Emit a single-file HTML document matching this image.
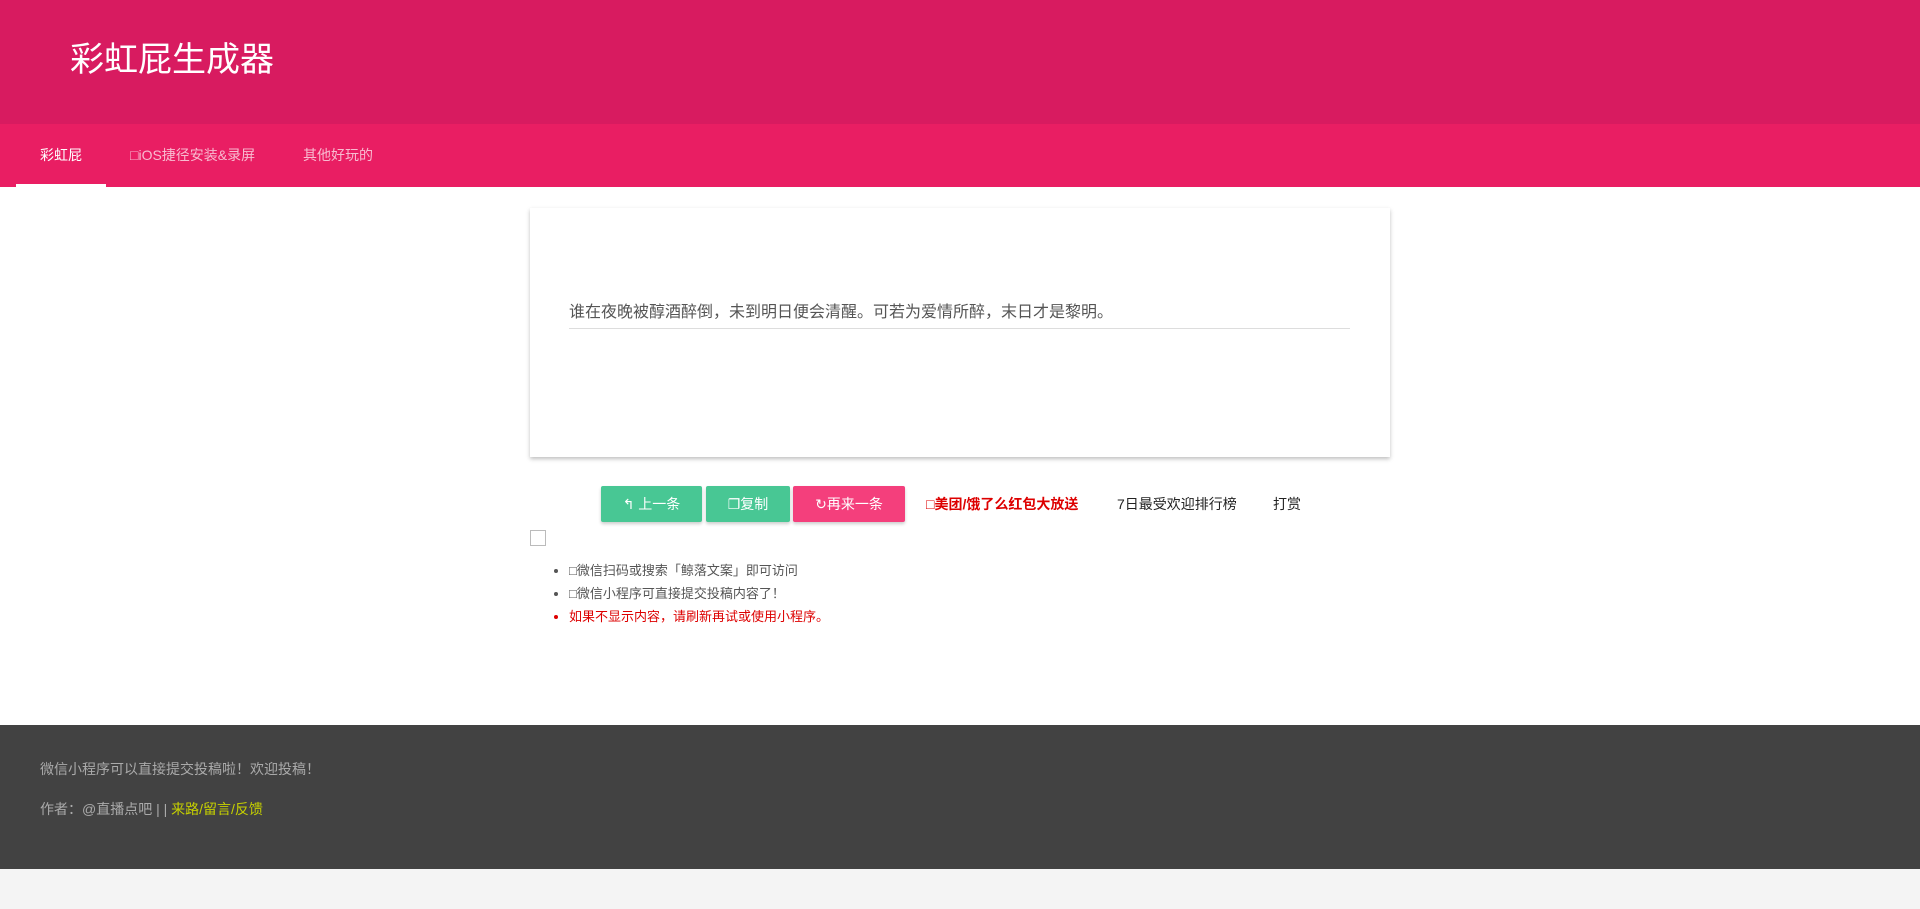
<!DOCTYPE html>
<html><head><meta charset="utf-8"><style>
body{margin:0;width:1920px;height:909px;background:#f4f4f4;font-family:"Liberation Sans","Noto Sans CJK SC",sans-serif;position:relative;overflow:hidden}
.top{position:absolute;left:0;top:0;width:1920px;height:124px;background:#d81b60}
.top h1{position:absolute;left:70px;top:38px;margin:0;font-size:34px;font-weight:normal;color:#fff;line-height:44px}
.nav{position:absolute;left:0;top:124px;width:1920px;height:63px;background:#e91e63}
.nav span{position:absolute;top:22px;font-size:14px;color:#f8bbd0;line-height:18px}
.nav .a{color:#fff}
.ul{position:absolute;left:16px;top:184px;width:90px;height:3px;background:#fff}
.main{position:absolute;left:0;top:187px;width:1920px;height:538px;background:#fff}
.card{position:absolute;left:530px;top:21px;width:860px;height:249px;background:#fff;box-shadow:0 2px 4px rgba(0,0,0,.25)}
.card .t{position:absolute;left:39px;top:93px;width:781px;font-size:16px;color:#555;line-height:24px;border-bottom:1px solid #ddd;padding-bottom:3px}
.btn{position:absolute;top:299px;height:36px;border-radius:2px;color:#fff;font-size:14px;line-height:36px;box-shadow:0 2px 3px rgba(0,0,0,.2);text-align:center}
.lk{position:absolute;top:308px;font-size:14px;line-height:18px}
.cb{position:absolute;left:530px;top:343px;width:14px;height:14px;border:1px solid #bbb}
ul{position:absolute;left:530px;top:372px;margin:0;padding-left:39px;font-size:13px;line-height:23px;color:#555}
.foot{position:absolute;left:0;top:725px;width:1920px;height:144px;background:#424242;color:#aaa;font-size:14px}
.foot p{position:absolute;left:40px;margin:0;line-height:18px}
</style></head><body>
<div class="top"><h1>彩虹屁生成器</h1></div>
<div class="nav"><span class="a" style="left:40px">彩虹屁</span><span style="left:130px">□iOS捷径安装&amp;录屏</span><span style="left:303px">其他好玩的</span></div>
<div class="ul"></div>
<div class="main">
<div class="card"><div class="t">谁在夜晚被醇酒醉倒，未到明日便会清醒。可若为爱情所醉，末日才是黎明。</div></div>
<div class="btn" style="left:601px;width:101px;background:#48c794">&#x21B0; 上一条</div>
<div class="btn" style="left:706px;width:84px;background:#48c794">&#x2750;复制</div>
<div class="btn" style="left:793px;width:112px;background:#f43f7c">&#x21BB;再来一条</div>
<div class="lk" style="left:926px;color:#d00;font-weight:bold">□美团/饿了么红包大放送</div>
<div class="lk" style="left:1117px;color:#222">7日最受欢迎排行榜</div>
<div class="lk" style="left:1273px;color:#222">打赏</div>
<div class="cb"></div>
<ul><li>□微信扫码或搜索「鲸落文案」即可访问</li><li>□微信小程序可直接提交投稿内容了！</li><li style="color:#d00">如果不显示内容，请刷新再试或使用小程序。</li></ul>
</div>
<div class="foot"><p style="top:35px">微信小程序可以直接提交投稿啦！欢迎投稿！</p><p style="top:75px">作者：@直播点吧 | | <span style="color:#c6d000">来路/留言/反馈</span></p></div>
</body></html>
